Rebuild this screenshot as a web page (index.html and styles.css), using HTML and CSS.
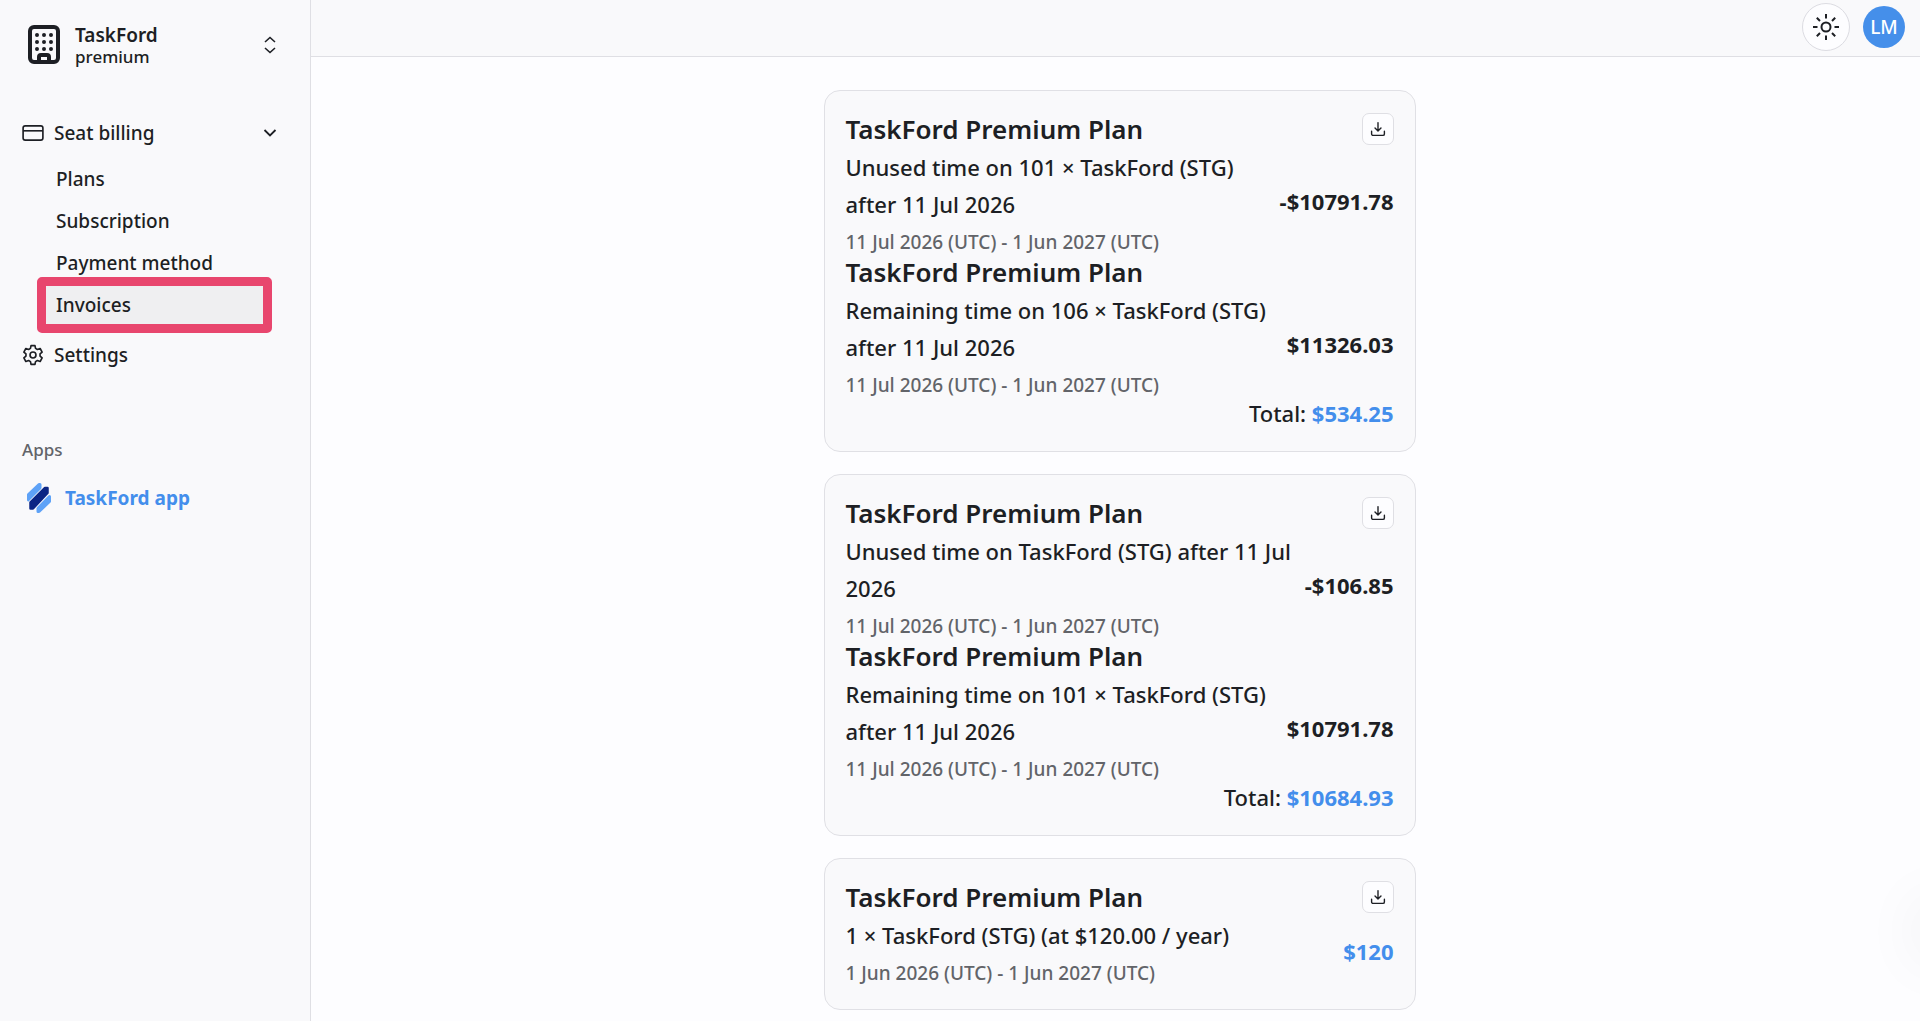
FILE: index.html
```html
<!DOCTYPE html>
<html lang="en">
<head>
<meta charset="utf-8">
<meta name="viewport" content="width=device-width, initial-scale=1">
<title>TaskFord – Invoices</title>
<link rel="stylesheet" href="styles.css">
</head>
<body>
<svg class="defs" aria-hidden="true">
  <symbol id="download" viewBox="0 0 15 15"><path d="M7.5 1.5v7.6M4.7 6.6l2.8 2.8 2.8-2.8M1.5 9.5v2.6a1.4 1.4 0 0 0 1.4 1.4h9.2a1.4 1.4 0 0 0 1.4-1.4V9.5" fill="none" stroke="currentColor" stroke-width="1.3" stroke-linecap="round" stroke-linejoin="round"/></symbol>
</svg>
<div class="app">
  <aside class="sidebar">
    <button class="workspace" type="button">
      <svg class="building" viewBox="0 0 32 40" aria-hidden="true">
        <rect x="2" y="2" width="28" height="35" rx="4" fill="none" stroke="currentColor" stroke-width="4"/>
        <path d="M11 37v-5q0-2 2-2h6q2 0 2 2v5" fill="none" stroke="currentColor" stroke-width="4"/>
        <path d="M9 10h0M16 10h0M23 10h0M9 17h0M16 17h0M23 17h0M9 24h0M16 24h0M23 24h0" stroke="currentColor" stroke-width="4" stroke-linecap="round"/>
      </svg>
      <span class="workspace-text"><strong>TaskFord</strong><span class="tier">premium</span></span>
      <svg class="chevron" viewBox="0 0 18 18" aria-hidden="true"><path d="M4 6l5-4.500 5 4.500M4 12l5 4.500 5-4.500" fill="none" stroke="currentColor" stroke-width="1.600"/></svg>
    </button>
    <nav class="nav" aria-label="Main">
      <button class="nav-row" type="button">
        <svg class="nav-icon" viewBox="0 0 20 20" aria-hidden="true"><rect x="1" y="3.500" width="18" height="13" rx="2" fill="none" stroke="currentColor" stroke-width="1.500"/><path d="M1 8h18" stroke="currentColor" stroke-width="1.500"/></svg>
        <span>Seat billing</span>
        <svg class="chevron" viewBox="0 0 18 18" aria-hidden="true"><path d="M3.500 6l5.500 5.500L14.500 6" fill="none" stroke="currentColor" stroke-width="1.800"/></svg>
      </button>
      <ul class="subnav">
        <li><a href="#plans">Plans</a></li>
        <li><a href="#subscription">Subscription</a></li>
        <li><a href="#payment">Payment method</a></li>
        <li><a class="current" href="#invoices" aria-current="page">Invoices</a></li>
      </ul>
      <a class="nav-row" href="#settings">
        <svg class="nav-icon" viewBox="0 0 20 20" aria-hidden="true"><g fill="none" stroke="currentColor" stroke-width="1.500" stroke-linejoin="round"><path d="M8.200 1.500h3.600l.5 2.500 1.700 1 2.500-.9 1.800 3.200-1.900 1.700v2l1.900 1.700-1.800 3.200-2.500-.9-1.700 1-.5 2.500H8.200L7.700 16 6 15l-2.500.9-1.800-3.200L3.600 11V9L1.700 7.300l1.800-3.200L6 5l1.700-1z"/><circle cx="10" cy="10" r="2.700"/></g></svg>
        <span>Settings</span>
      </a>
    </nav>
    <h2 class="apps-title">Apps</h2>
    <a class="app-link" href="#app">
      <svg class="logo" viewBox="0 0 26 32" aria-hidden="true">
        <g stroke-linejoin="round" stroke-width="3">
          <path d="M2.500 12.500L13 2.500H14V6.500L2.500 18z" fill="#5ea2f7" stroke="#5ea2f7"/>
          <path d="M23.500 14.500L12 26V29.500H13L23.500 19.500z" fill="#5ea2f7" stroke="#5ea2f7"/>
          <path d="M4.500 20.500L19 6H21.500V11L7 26.500H4.500z" fill="#0b2584" stroke="#f9f9fb" stroke-width="4"/>
          <path d="M4.500 20.500L19 6H21.500V11L7 26.500H4.500z" fill="#0b2584" stroke="#0b2584" stroke-width="2.500"/>
        </g>
      </svg>
      <span>TaskFord app</span>
    </a>
  </aside>
  <div class="page">
    <header class="topbar">
      <button class="theme" type="button" aria-label="Switch theme">
        <svg viewBox="0 0 26 26" aria-hidden="true"><g fill="none" stroke="currentColor" stroke-width="2"><circle cx="13" cy="13" r="4.500"/><path d="M13 0v4.500M13 21.500V26M0 13h4.500M21.500 13H26M3.800 3.800L7 7M19 19l3.200 3.200M22.200 3.800L19 7M7 19l-3.200 3.200"/></g></svg>
      </button>
      <button class="avatar" type="button">LM</button>
    </header>
    <main class="invoices">
      <article class="card">
        <section class="item">
          <div class="item-head"><h3>TaskFord Premium Plan</h3><button class="download" type="button" aria-label="Download invoice"><svg aria-hidden="true"><use href="#download"/></svg></button></div>
          <div class="item-body"><div><p class="desc">Unused time on 101 × TaskFord (STG) after 11 Jul 2026</p><p class="period">11 Jul 2026 (UTC) - 1 Jun 2027 (UTC)</p></div><strong class="amount">-$10791.78</strong></div>
        </section>
        <section class="item">
          <div class="item-head"><h3>TaskFord Premium Plan</h3></div>
          <div class="item-body"><div><p class="desc">Remaining time on 106 × TaskFord (STG) after 11 Jul 2026</p><p class="period">11 Jul 2026 (UTC) - 1 Jun 2027 (UTC)</p></div><strong class="amount">$11326.03</strong></div>
        </section>
        <p class="total">Total: <strong class="blue">$534.25</strong></p>
      </article>
      <article class="card">
        <section class="item">
          <div class="item-head"><h3>TaskFord Premium Plan</h3><button class="download" type="button" aria-label="Download invoice"><svg aria-hidden="true"><use href="#download"/></svg></button></div>
          <div class="item-body"><div><p class="desc">Unused time on TaskFord (STG) after 11 Jul 2026</p><p class="period">11 Jul 2026 (UTC) - 1 Jun 2027 (UTC)</p></div><strong class="amount">-$106.85</strong></div>
        </section>
        <section class="item">
          <div class="item-head"><h3>TaskFord Premium Plan</h3></div>
          <div class="item-body"><div><p class="desc">Remaining time on 101 × TaskFord (STG) after 11 Jul 2026</p><p class="period">11 Jul 2026 (UTC) - 1 Jun 2027 (UTC)</p></div><strong class="amount">$10791.78</strong></div>
        </section>
        <p class="total">Total: <strong class="blue">$10684.93</strong></p>
      </article>
      <article class="card">
        <section class="item">
          <div class="item-head"><h3>TaskFord Premium Plan</h3><button class="download" type="button" aria-label="Download invoice"><svg aria-hidden="true"><use href="#download"/></svg></button></div>
          <div class="item-body"><div><p class="desc">1 × TaskFord (STG) (at $120.00 / year)</p><p class="period">1 Jun 2026 (UTC) - 1 Jun 2027 (UTC)</p></div><strong class="amount blue">$120</strong></div>
        </section>
      </article>
    </main>
  </div>
</div>
<div class="edge-shade" aria-hidden="true"></div>
</body>
</html>
```
FILE: styles.css
```css
* { box-sizing: border-box; }

body {
  margin: 0;
  background: #fdfdff;
  color: #1d1f24;
  font-family: "Noto Sans", "Open Sans", sans-serif;
  font-size: 19px;
  font-weight: 500;
}

h2, h3, p, ul { margin: 0; padding: 0; }
ul { list-style: none; }
a { color: inherit; text-decoration: none; }
button {
  padding: 0;
  border: 0;
  background: none;
  color: inherit;
  font: inherit;
  text-align: left;
  cursor: pointer;
}
svg { display: block; flex: none; }
.defs { display: none; }

.app {
  display: grid;
  grid-template-columns: 311px 1fr;
  min-height: 100vh;
}

.sidebar {
  display: flex;
  flex-direction: column;
  padding: 22px 31px 24px 22px;
  background: #f9f9fb;
  border-right: 1px solid #dfdfe4;
}

.workspace {
  display: flex;
  align-items: center;
  gap: 15px;
  height: 46px;
  padding-left: 6px;
}
.building { width: 32px; height: 40px; }
.workspace-text {
  display: flex;
  flex: 1;
  flex-direction: column;
}
.workspace-text strong { font-weight: 600; line-height: 24px; }
.tier { font-size: 17px; line-height: 20px; }
.chevron { width: 18px; height: 18px; }

.nav { margin-top: 44px; }
.nav-row {
  display: flex;
  align-items: center;
  gap: 10px;
  width: 100%;
  height: 42px;
}
.nav-row span { flex: 1; }
.nav-icon { width: 22px; height: 22px; }
.subnav { padding: 4px 16px 8px 24px; }
.subnav a {
  display: block;
  padding-left: 10px;
  line-height: 42px;
  border-radius: 4px;
}
.subnav .current {
  position: relative;
  background: #efeff1;
}
.subnav .current::after {
  content: "";
  position: absolute;
  inset: -7px -9px;
  border: 9px solid #e8466e;
  border-radius: 5px;
}

.apps-title {
  margin-top: 62px;
  color: #626469;
  font-size: 17px;
  font-weight: 500;
  line-height: 24px;
}
.app-link {
  display: flex;
  align-items: center;
  gap: 13px;
  margin-top: 20px;
  padding-left: 4px;
  color: #438eec;
  font-weight: 700;
  line-height: 32px;
}
.logo { width: 26px; height: 32px; }

.topbar {
  display: flex;
  align-items: center;
  justify-content: flex-end;
  gap: 13px;
  height: 57px;
  padding: 0 15px 2px 0;
  background: #f9f9fb;
  border-bottom: 1px solid #dfdfe4;
}
.theme {
  display: grid;
  place-items: center;
  width: 48px;
  height: 48px;
  border: 1px solid #dcdce2;
  border-radius: 50%;
  background: #fdfdff;
}
.theme svg { width: 26px; height: 26px; }
.avatar {
  width: 42px;
  height: 42px;
  border-radius: 50%;
  background: #458fea;
  color: #fff;
  text-align: center;
}

.invoices {
  display: flex;
  flex-direction: column;
  align-items: center;
  gap: 22px;
  padding: 33px 0 12px 8px;
}
.card {
  width: 100%;
  max-width: 592px;
  padding: 22px 21px;
  border: 1px solid #e0e0e5;
  border-radius: 16px;
  background: #f9f9fb;
  font-size: 22px;
}
.item-head {
  display: flex;
  justify-content: space-between;
  margin-bottom: 3px;
}
h3 {
  font-size: 26px;
  font-weight: 600;
  line-height: 33px;
}
.download {
  display: grid;
  place-items: center;
  width: 32px;
  height: 32px;
  border: 1px solid #dfdfe4;
  border-radius: 7px;
  background: #fdfdff;
}
.download svg { width: 16px; height: 16px; }
.item-body {
  display: flex;
  align-items: center;
  justify-content: space-between;
  gap: 12px;
}
.desc { line-height: 37px; }
.period {
  margin-top: 5px;
  color: #626469;
  font-size: 19px;
  line-height: 28px;
}
.amount { padding-bottom: 3px; font-weight: 700; }
.total { padding-bottom: 2px; line-height: 28px; text-align: right; }
.blue { color: #438eec; font-weight: 700; }

.edge-shade {
  position: fixed;
  right: -40px;
  bottom: 60px;
  width: 40px;
  height: 60px;
  border-radius: 20px;
  box-shadow: 0 0 60px 6px rgba(0, 0, 0, 0.05);
  pointer-events: none;
}
```
